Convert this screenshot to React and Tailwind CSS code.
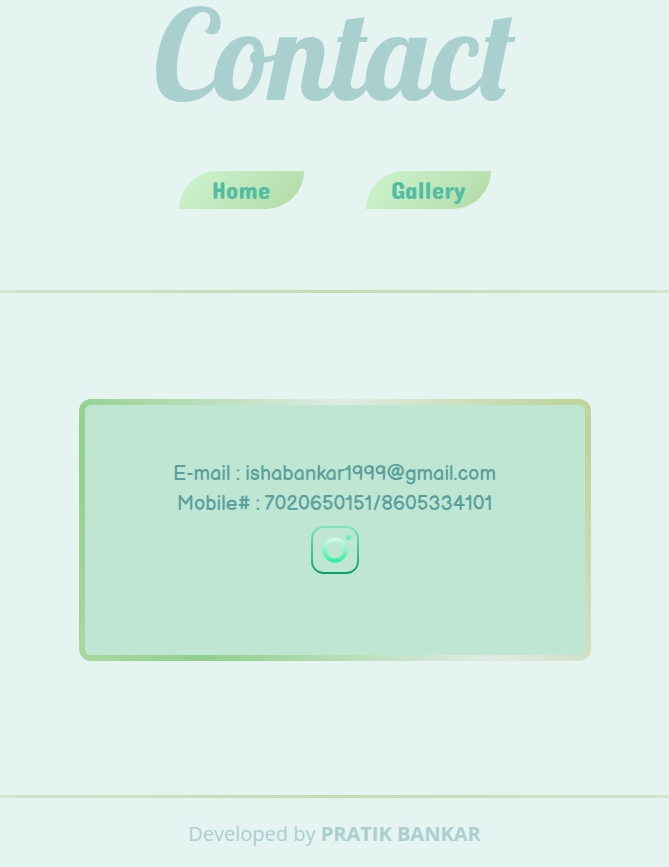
const navItems = [
  { label: 'Home', href: '#home' },
  { label: 'Gallery', href: '#gallery' },
];

function Rule() {
  return (
    <hr className="h-[3px] w-full border-0 bg-[linear-gradient(90deg,#d0e5ca,#bfdead_50%,#d0e5ca)]" />
  );
}

function InstagramIcon() {
  return (
    <svg viewBox="0 0 48 48" className="size-12" aria-hidden="true">
      <defs>
        <linearGradient id="frame" x1="0" y1="0" x2="0" y2="1">
          <stop offset="0" stopColor="#7ae4c3" />
          <stop offset="1" stopColor="#0d9f62" />
        </linearGradient>
        <linearGradient id="lens" x1="0" y1="0" x2="0" y2="1">
          <stop offset="0" stopColor="#cffae9" />
          <stop offset="1" stopColor="#38ef9f" />
        </linearGradient>
        <linearGradient id="flash" x1="0" y1="0" x2="0" y2="1">
          <stop offset="0" stopColor="#87efcb" />
          <stop offset="1" stopColor="#5cebb1" />
        </linearGradient>
      </defs>
      <rect x="1" y="1" width="46" height="46" rx="11.5" fill="none" stroke="url(#frame)" strokeWidth="1.9" />
      <circle cx="24" cy="24" r="10.6" fill="none" stroke="url(#lens)" strokeWidth="4" />
      <circle cx="37.5" cy="11.5" r="2.8" fill="url(#flash)" />
    </svg>
  );
}

export default function App() {
  return (
    <div className="flex min-h-screen flex-col bg-[#e5f4f1]">
      <header className="flex flex-col items-center pb-[81px]">
        <h1 className="font-['Lobster','Liberation_Serif',serif] text-[125px] leading-[106px] font-normal text-[#a9d0cf]">
          Contact
        </h1>
        <nav className="mt-[65px] flex gap-[62px]">
          {navItems.map((item) => (
            <a
              key={item.label}
              href={item.href}
              className="flex h-[38px] w-[125px] items-center justify-center rounded-tl-[38px] rounded-br-[38px] bg-[linear-gradient(135deg,#cdf5cf,#b2d9a5)] font-['Concert_One','Roboto',sans-serif] text-[25px] text-[#51bda2]"
            >
              {item.label}
            </a>
          ))}
        </nav>
      </header>
      <Rule />
      <main className="flex flex-col items-center px-4 pt-[106px] pb-[134px]">
        <section className="w-full max-w-[512px] rounded-xl bg-[linear-gradient(60deg,#aad8a0,#8fd08a_19%,#e0ebe3_62%,#bfd59d_95%)] p-[6px]">
          <div className="flex flex-col items-center rounded-md bg-[#bee6d3] pt-[54px] pb-[81px] text-center font-['Balsamiq_Sans','Lato',sans-serif] text-xl leading-[30px] text-[#599f9c]">
            <p>E-mail : ishabankar1999@gmail.com</p>
            <p>Mobile# : 7020650151/8605334101</p>
            <a href="#instagram" aria-label="Instagram" className="mt-[7px]">
              <InstagramIcon />
            </a>
          </div>
        </section>
      </main>
      <Rule />
      <footer className="pt-[22px] pb-4 text-center font-['Segoe_UI','Open_Sans',sans-serif] text-xl leading-7 text-[#a9d0cf]">
        Developed by <strong className="font-bold">PRATIK BANKAR</strong>
      </footer>
    </div>
  );
}
